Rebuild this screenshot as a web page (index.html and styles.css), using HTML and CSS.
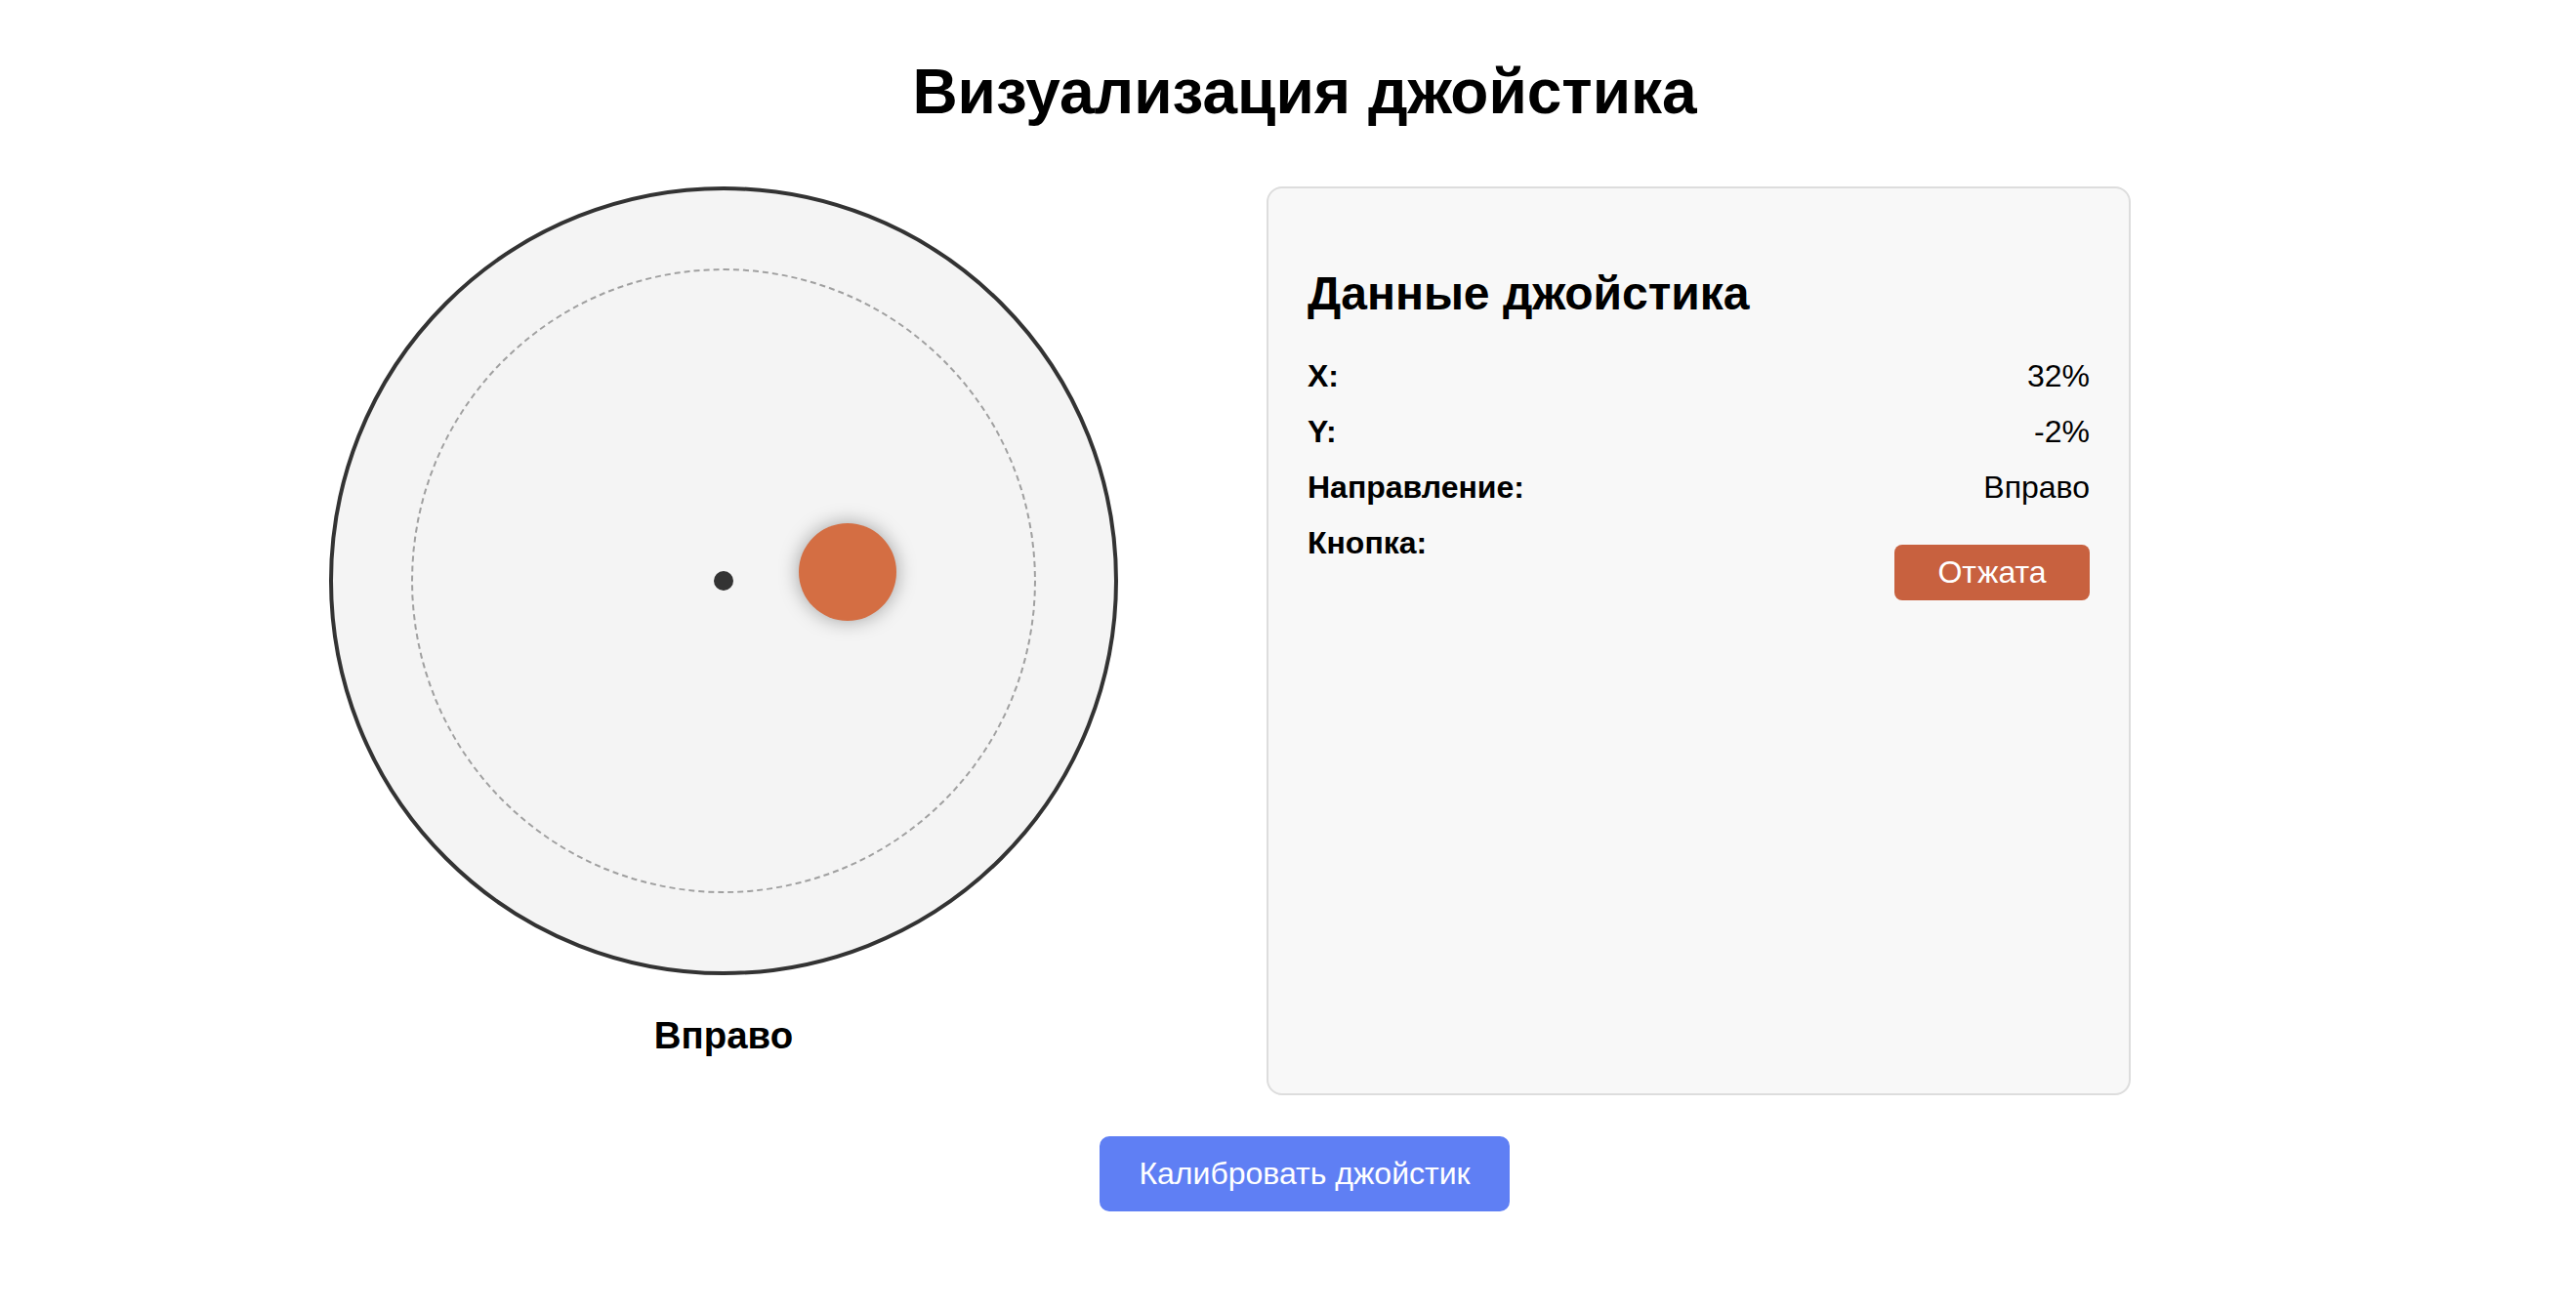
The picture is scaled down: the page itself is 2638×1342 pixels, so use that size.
FILE: index.html
```html
<!DOCTYPE html>
<html lang="ru">
<head>
<meta charset="utf-8">
<title>Визуализация джойстика</title>
<link rel="stylesheet" href="styles.css">
</head>
<body>
  <h1 class="page-title">Визуализация джойстика</h1>
  <div class="layout">
    <div class="stick-column">
      <div class="stick-base">
        <div class="stick-range"></div>
        <div class="stick-center"></div>
        <div class="stick-knob" style="left: calc(50% + 127px); top: calc(50% - 9px);"></div>
      </div>
      <div class="stick-direction">Вправо</div>
    </div>
    <div class="data-panel">
      <h2 class="panel-title">Данные джойстика</h2>
      <div class="data-row"><span class="data-label">X:</span><span class="data-value">32%</span></div>
      <div class="data-row"><span class="data-label">Y:</span><span class="data-value">-2%</span></div>
      <div class="data-row"><span class="data-label">Направление:</span><span class="data-value">Вправо</span></div>
      <div class="data-row"><span class="data-label">Кнопка:</span><span class="state-badge">Отжата</span></div>
    </div>
  </div>
  <div class="actions">
    <button class="calibrate-btn" type="button">Калибровать джойстик</button>
  </div>
</body>
</html>
```

FILE: styles.css
```css
html, body {
  background: #ffffff;
}
body {
  margin: 0 0 0 34px;
  font-family: "Liberation Sans", Arial, Helvetica, sans-serif;
  font-size: 32px;
  color: #000;
}
.page-title {
  margin: 57px 0 0 0;
  font-size: 64px;
  font-weight: bold;
  text-align: center;
  line-height: normal;
}
.layout {
  display: flex;
  align-items: stretch;
  gap: 152px;
  padding-left: 303px;
  margin-top: 60px;
}
.stick-column {
  width: 808px;
  display: flex;
  flex-direction: column;
  align-items: center;
}
.stick-base {
  position: relative;
  width: 800px;
  height: 800px;
  border: 4px solid #333;
  border-radius: 50%;
  background: #f4f4f4;
}
.stick-range {
  position: absolute;
  left: 80px;
  top: 80px;
  width: 636px;
  height: 636px;
  border: 2px dashed #a0a0a0;
  border-radius: 50%;
}
.stick-center {
  position: absolute;
  left: 390px;
  top: 390px;
  width: 20px;
  height: 20px;
  border-radius: 50%;
  background: #333;
}
.stick-knob {
  position: absolute;
  width: 100px;
  height: 100px;
  margin: -50px 0 0 -50px;
  border-radius: 50%;
  background: #d46e43;
  box-shadow: 0 0 20px rgba(0, 0, 0, 0.35);
}
.stick-direction {
  margin-top: 40px;
  font-size: 38.4px;
  font-weight: bold;
}
.data-panel {
  width: 801px;
  height: 887px;
  padding: 0 40px 40px 40px;
  border: 2px solid #dddddd;
  border-radius: 16px;
  background: #f8f8f8;
}
.panel-title {
  margin: 80px 0 39px 0;
  font-size: 48px;
  font-weight: bold;
}
.data-row {
  display: flex;
  justify-content: space-between;
  align-items: flex-start;
  margin-bottom: 20px;
}
.data-label {
  font-weight: bold;
}
.state-badge {
  margin-top: 20px;
  width: 200px;
  height: 57px;
  line-height: 57px;
  text-align: center;
  color: #fff;
  background: #c8613f;
  border-radius: 8px;
}
.actions {
  display: flex;
  justify-content: center;
  margin-top: 42px;
}
.calibrate-btn {
  font-family: "Liberation Sans", Arial, Helvetica, sans-serif;
  font-size: 32px;
  color: #fff;
  background: #5f7ff4;
  border: none;
  border-radius: 10px;
  padding: 20px 40px;
  width: 420px;
  height: 77px;
  line-height: normal;
}
```
